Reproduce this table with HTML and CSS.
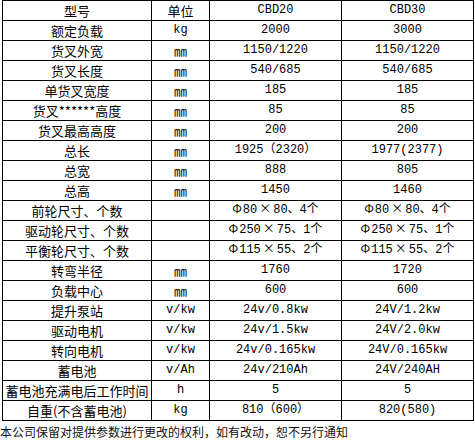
FILE: index.html
```html
<!DOCTYPE html>
<html lang="zh">
<head>
<meta charset="utf-8">
<link rel="stylesheet" href="styles.css">
</head>
<body>
<table class="spec">
<colgroup><col class="c1"><col class="c2"><col class="c3"><col class="c4"></colgroup>
<tr><td class="name">型号</td><td class="name">单位</td><td>CBD20</td><td>CBD30</td></tr>
<tr><td class="name">额定负载</td><td>kg</td><td>2000</td><td>3000</td></tr>
<tr><td class="name">货叉外宽</td><td class="cj">㎜</td><td>1150/1220</td><td>1150/1220</td></tr>
<tr><td class="name">货叉长度</td><td class="cj">㎜</td><td>540/685</td><td>540/685</td></tr>
<tr><td class="name">单货叉宽度</td><td class="cj">㎜</td><td>185</td><td>185</td></tr>
<tr><td class="name">货叉******高度</td><td class="cj">㎜</td><td>85</td><td>85</td></tr>
<tr><td class="name">货叉最高高度</td><td class="cj">㎜</td><td>200</td><td>200</td></tr>
<tr><td class="name">总长</td><td class="cj">㎜</td><td>1925（2320）</td><td>1977(2377)</td></tr>
<tr><td class="name">总宽</td><td class="cj">㎜</td><td>888</td><td>805</td></tr>
<tr><td class="name">总高</td><td class="cj">㎜</td><td>1450</td><td>1460</td></tr>
<tr><td class="name">前轮尺寸、个数</td><td></td><td><span class="sym">Φ</span>80<span class="sym x">×</span>80、4个</td><td><span class="sym">Φ</span>80<span class="sym x">×</span>80、4个</td></tr>
<tr><td class="name">驱动轮尺寸、个数</td><td></td><td><span class="sym">Φ</span>250<span class="sym x">×</span>75、1个</td><td><span class="sym">Φ</span>250<span class="sym x">×</span>75、1个</td></tr>
<tr><td class="name">平衡轮尺寸、个数</td><td></td><td><span class="sym">Φ</span>115<span class="sym x">×</span>55、2个</td><td><span class="sym">Φ</span>115<span class="sym x">×</span>55、2个</td></tr>
<tr><td class="name">转弯半径</td><td class="cj">㎜</td><td>1760</td><td>1720</td></tr>
<tr><td class="name">负载中心</td><td class="cj">㎜</td><td>600</td><td>600</td></tr>
<tr><td class="name">提升泵站</td><td>v/kw</td><td>24v/0.8kw</td><td>24V/1.2kw</td></tr>
<tr><td class="name">驱动电机</td><td>v/kw</td><td>24v/1.5kw</td><td>24V/2.0kw</td></tr>
<tr><td class="name">转向电机</td><td>v/kw</td><td>24v/0.165kw</td><td>24V/0.165kw</td></tr>
<tr><td class="name">蓄电池</td><td>v/Ah</td><td>24v/210Ah</td><td>24V/240AH</td></tr>
<tr><td class="name">蓄电池充满电后工作时间</td><td>h</td><td>5</td><td>5</td></tr>
<tr><td class="name">自重(不含蓄电池)</td><td>kg</td><td>810（600）</td><td>820(580)</td></tr>
</table>
<p class="note">本公司保留对提供参数进行更改的权利，如有改动，恕不另行通知</p>
</body>
</html>
```
FILE: styles.css
```css
html, body {
  margin: 0;
  padding: 0;
  background: #fff;
  color: #000;
}
.spec {
  margin-left: 2px;
  border-collapse: collapse;
  table-layout: fixed;
  width: 472px;
  font-family: "Liberation Mono", "Noto Sans CJK SC", monospace;
  font-size: 12px;
}
.c1 { width: 149px; }
.c2 { width: 58px; }
.c3 { width: 132px; }
.c4 { width: 132px; }
.spec td {
  border: 1px solid #000;
  height: 19px;
  padding: 0;
  text-align: center;
  vertical-align: middle;
  line-height: 19px;
  white-space: nowrap;
  overflow: hidden;
}
.spec td.name, .spec td.cj {
  font-family: "Noto Sans CJK SC", sans-serif;
  font-size: 13px;
}
.sym {
  font-family: "Noto Sans CJK SC", sans-serif;
  font-size: 12px;
  line-height: 1;
  padding-right: 1px;
}
.sym.x {
  padding: 0 2px;
}
.note {
  margin: 2px 0 0 0;
  font-family: "Noto Sans CJK SC", sans-serif;
  font-size: 12px;
  line-height: 18px;
  color: #111;
}
```
